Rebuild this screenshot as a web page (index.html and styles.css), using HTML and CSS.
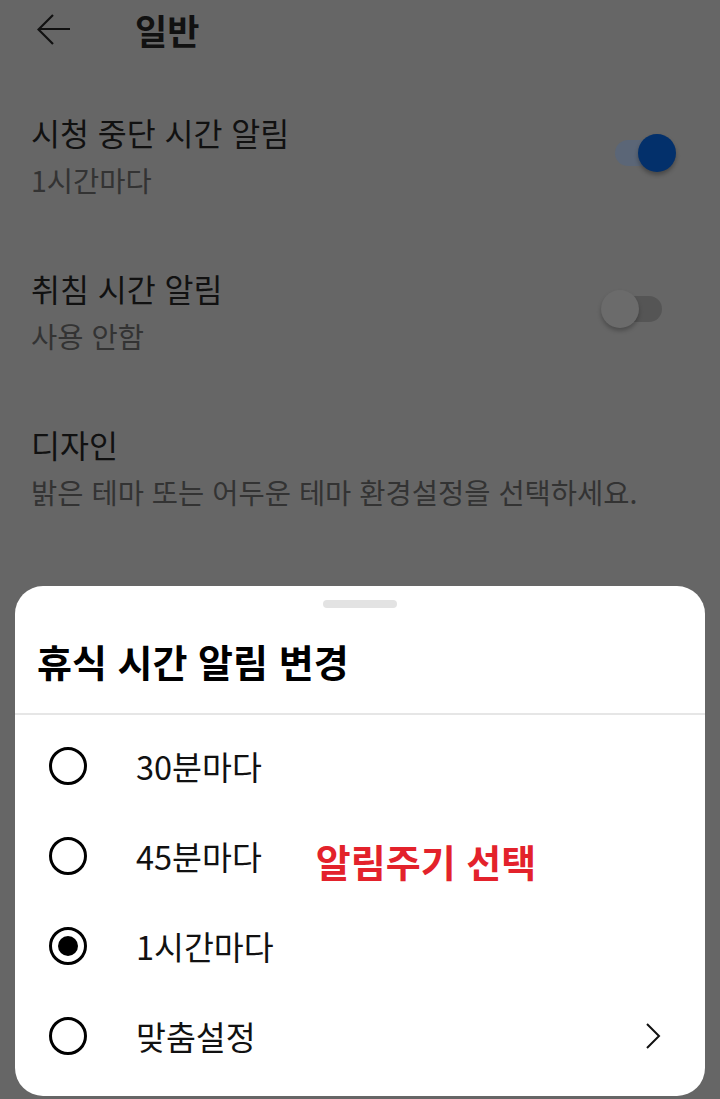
FILE: index.html
```html
<!DOCTYPE html>
<html lang="ko">
<head>
<meta charset="utf-8">
<title>일반</title>
<link rel="stylesheet" href="styles.css">
</head>
<body>
<div class="screen">
  <header class="appbar">
    <svg class="back" width="34" height="32" viewBox="0 0 34 32" aria-hidden="true">
      <path d="M33 15H1.5M16 1L1.5 15.5L16 30" fill="none" stroke="#111" stroke-width="2.2" stroke-linejoin="miter"/>
    </svg>
    <h1 class="appbar-title">일반</h1>
  </header>

  <main class="settings">
    <div class="setting">
      <div class="setting-text">
        <div class="setting-title">시청 중단 시간 알림</div>
        <div class="setting-sub">1시간마다</div>
      </div>
      <div class="toggle toggle-on"><span class="knob"></span></div>
    </div>
    <div class="setting">
      <div class="setting-text">
        <div class="setting-title">취침 시간 알림</div>
        <div class="setting-sub">사용 안함</div>
      </div>
      <div class="toggle toggle-off"><span class="knob"></span></div>
    </div>
    <div class="setting">
      <div class="setting-text">
        <div class="setting-title">디자인</div>
        <div class="setting-sub">밝은 테마 또는 어두운 테마 환경설정을 선택하세요.</div>
      </div>
    </div>
  </main>

  <section class="sheet">
    <div class="handle"></div>
    <h2 class="sheet-title">휴식 시간 알림 변경</h2>
    <div class="divider"></div>
    <ul class="options">
      <li class="option"><span class="radio"></span><span class="option-label">30분마다</span></li>
      <li class="option"><span class="radio"></span><span class="option-label">45분마다</span><span class="note">알림주기 선택</span></li>
      <li class="option"><span class="radio radio-checked"></span><span class="option-label">1시간마다</span></li>
      <li class="option"><span class="radio"></span><span class="option-label">맞춤설정</span>
        <svg class="chevron" width="16" height="28" viewBox="0 0 16 28" aria-hidden="true">
          <path d="M2 2L14 14L2 26" fill="none" stroke="#111" stroke-width="2"/>
        </svg>
      </li>
    </ul>
  </section>
</div>
</body>
</html>
```

FILE: styles.css
```css
html, body {
  margin: 0;
  padding: 0;
}

body {
  background: #666666;
  font-family: "Noto Sans CJK KR", "Noto Sans", sans-serif;
  color: #111111;
}

.screen {
  position: relative;
  width: 720px;
  height: 1099px;
  overflow: hidden;
}

.appbar {
  height: 60px;
  display: flex;
  align-items: center;
  padding-left: 37px;
}

.back {
  display: block;
  flex: none;
}

.appbar-title {
  margin: 0 0 0 64px;
  font-size: 35px;
  font-weight: 700;
  line-height: 44px;
  color: #111111;
}

.settings {
  padding-top: 18px;
}

.setting {
  display: flex;
  align-items: center;
  padding: 34px 58px 34px 31px;
}

.setting-text {
  flex: 1;
  min-width: 0;
}

.setting-title {
  font-size: 31.5px;
  line-height: 40px;
  color: #111111;
}

.setting-sub {
  margin-top: 8px;
  font-size: 28.5px;
  line-height: 40px;
  color: #333333;
  white-space: nowrap;
}

.toggle {
  position: relative;
  flex: none;
  width: 47px;
  height: 26px;
  border-radius: 13px;
  margin-bottom: 7px;
}

.toggle .knob {
  position: absolute;
  top: -6px;
  width: 38px;
  height: 38px;
  border-radius: 50%;
}

.toggle-on {
  background: #5b6677;
}

.toggle-on .knob {
  right: -14px;
  background: #03306b;
  box-shadow: 0 3px 4px rgba(0, 0, 0, 0.3);
}

.toggle-off {
  background: #555555;
}

.toggle-off .knob {
  left: -14px;
  background: #6b6b6b;
  box-shadow: 0 3px 4px rgba(0, 0, 0, 0.25);
}

/* bottom sheet lies over the settings list */
.sheet {
  position: absolute;
  left: 15px;
  right: 15px;
  top: 586px;
  height: 510px;
  background: #ffffff;
  border-radius: 28px;
  display: flex;
  flex-direction: column;
}

.handle {
  align-self: center;
  margin-top: 14px;
  width: 74px;
  height: 8px;
  border-radius: 4px;
  background: #e3e3e3;
}

.sheet-title {
  margin: 28px 0 0;
  padding-left: 22px;
  font-size: 38px;
  font-weight: 700;
  line-height: 50px;
  color: #000000;
}

.divider {
  margin-top: 27px;
  height: 2px;
  background: #e6e6e6;
}

.options {
  list-style: none;
  margin: 0;
  padding: 6px 0 0;
}

.option {
  display: flex;
  align-items: center;
  height: 90px;
  padding: 0 44px 0 34px;
}

.radio {
  position: relative;
  flex: none;
  box-sizing: border-box;
  width: 38px;
  height: 38px;
  border: 3.5px solid #000000;
  border-radius: 50%;
}

.radio-checked::after {
  content: "";
  position: absolute;
  left: 5.5px;
  top: 5.5px;
  width: 20px;
  height: 20px;
  border-radius: 50%;
  background: #000000;
}

.option-label {
  margin-left: 49px;
  font-size: 32.5px;
  line-height: 40px;
  color: #111111;
}

.note {
  margin: 10px 0 0 54px;
  font-size: 38px;
  font-weight: 700;
  line-height: 44px;
  color: #e3222b;
}

.chevron {
  display: block;
  margin-left: auto;
  flex: none;
}
```
